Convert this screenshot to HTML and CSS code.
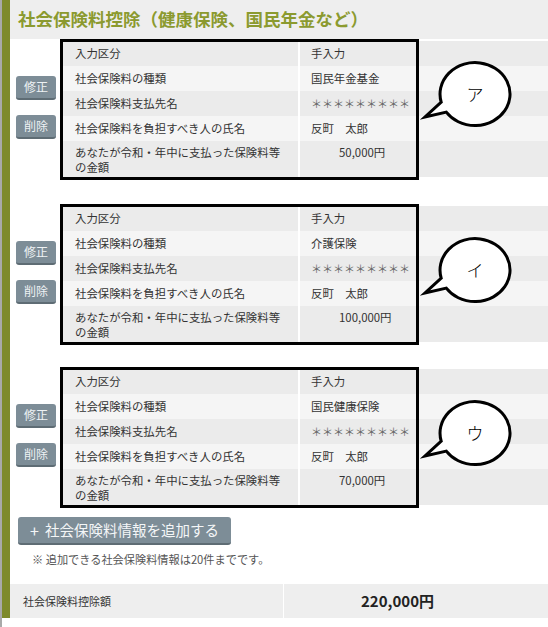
FILE: index.html
```html
<!DOCTYPE html>
<html lang="ja">
<head>
<meta charset="utf-8">
<link rel="stylesheet" href="styles.css">
</head>
<body>
<div class="frame">
  <div class="section">
    <div class="header"><h1 class="title">社会保険料控除（健康保険、国民年金など）</h1></div>

    <div class="record">
      <div class="btns"><button class="btn">修正</button><button class="btn">削除</button></div>
      <div class="table">
        <div class="row dark"><div class="cell label">入力区分</div><div class="cell value">手入力</div></div>
        <div class="row light"><div class="cell label">社会保険料の種類</div><div class="cell value">国民年金基金</div></div>
        <div class="row dark"><div class="cell label">社会保険料支払先名</div><div class="cell value mask">＊＊＊＊＊＊＊＊＊</div></div>
        <div class="row light"><div class="cell label">社会保険料を負担すべき人の氏名</div><div class="cell value">反町　太郎</div></div>
        <div class="row dark tall"><div class="cell label">あなたが令和・年中に支払った保険料等<br>の金額</div><div class="cell value amount">50,000円</div></div>
      </div>
      <div class="frame-box"></div>
      <svg class="bubble bubble-a" viewBox="0 0 100 76" width="100" height="76"><path d="M 21.2 46.2 L 5 61 L 26.3 56.1 A 35 31.5 0 1 0 21.2 46.2 Z" fill="#fff" stroke="#000" stroke-width="3" stroke-linejoin="miter"/><text x="55" y="45" text-anchor="middle" class="bubble-text">ア</text></svg>
    </div>

    <div class="record">
      <div class="btns"><button class="btn">修正</button><button class="btn">削除</button></div>
      <div class="table">
        <div class="row dark"><div class="cell label">入力区分</div><div class="cell value">手入力</div></div>
        <div class="row light"><div class="cell label">社会保険料の種類</div><div class="cell value">介護保険</div></div>
        <div class="row dark"><div class="cell label">社会保険料支払先名</div><div class="cell value mask">＊＊＊＊＊＊＊＊＊</div></div>
        <div class="row light"><div class="cell label">社会保険料を負担すべき人の氏名</div><div class="cell value">反町　太郎</div></div>
        <div class="row dark tall"><div class="cell label">あなたが令和・年中に支払った保険料等<br>の金額</div><div class="cell value amount">100,000円</div></div>
      </div>
      <div class="frame-box"></div>
      <svg class="bubble bubble-b" viewBox="0 0 100 76" width="100" height="76"><path d="M 21.2 46.2 L 5 61 L 26.3 56.1 A 35 31.5 0 1 0 21.2 46.2 Z" fill="#fff" stroke="#000" stroke-width="3" stroke-linejoin="miter"/><text x="55" y="45" text-anchor="middle" class="bubble-text">イ</text></svg>
    </div>

    <div class="record last">
      <div class="btns"><button class="btn">修正</button><button class="btn">削除</button></div>
      <div class="table">
        <div class="row dark"><div class="cell label">入力区分</div><div class="cell value">手入力</div></div>
        <div class="row light"><div class="cell label">社会保険料の種類</div><div class="cell value">国民健康保険</div></div>
        <div class="row dark"><div class="cell label">社会保険料支払先名</div><div class="cell value mask">＊＊＊＊＊＊＊＊＊</div></div>
        <div class="row light"><div class="cell label">社会保険料を負担すべき人の氏名</div><div class="cell value">反町　太郎</div></div>
        <div class="row dark tall"><div class="cell label">あなたが令和・年中に支払った保険料等<br>の金額</div><div class="cell value amount">70,000円</div></div>
      </div>
      <div class="frame-box"></div>
      <svg class="bubble bubble-c" viewBox="0 0 100 76" width="100" height="76"><path d="M 21.2 46.2 L 5 61 L 26.3 56.1 A 35 31.5 0 1 0 21.2 46.2 Z" fill="#fff" stroke="#000" stroke-width="3" stroke-linejoin="miter"/><text x="55" y="45" text-anchor="middle" class="bubble-text">ウ</text></svg>
    </div>

    <div class="add-area">
      <button class="add-btn"><span class="plus">+</span>社会保険料情報を追加する</button>
      <p class="note">※ 追加できる社会保険料情報は20件までです。</p>
    </div>

    <div class="total">
      <div class="total-label">社会保険料控除額</div>
      <div class="total-value">220,000円</div>
    </div>
  </div>
</div>
</body>
</html>
```

FILE: styles.css
```css
* { box-sizing: border-box; }

html, body {
  margin: 0;
  padding: 0;
  background: #fff;
}

body {
  font-family: "Noto Sans CJK JP", "Noto Sans", sans-serif;
  color: #333;
  width: 548px;
  height: 627px;
  overflow: hidden;
}

.frame {
  border-left: 2px solid #a9a9a9;
  min-height: 627px;
}

.section {
  border-left: 8px solid #7e8a2b;
}

.header {
  background: #eeeeee;
  height: 39px;
  padding-left: 8px;
  display: flex;
  align-items: center;
}

.title {
  margin: 0;
  font-size: 17.5px;
  line-height: 20px;
  font-weight: bold;
  color: #8b9a2f;
  letter-spacing: 0;
  padding-bottom: 2px;
}

.record {
  position: relative;
  display: flex;
  height: 141px;
  margin-bottom: 24px;
}

.record.last {
  margin-top: -2px;
}

.btns {
  width: 50px;
  display: flex;
  flex-direction: column;
  justify-content: center;
  gap: 15px;
  padding-left: 6px;
  padding-bottom: 4px;
}

.btn {
  width: 40px;
  height: 24px;
  padding: 0;
  border: none;
  border-bottom: 2px solid #5e6c74;
  border-radius: 3px;
  background: #7d8d97;
  color: #eef2f4;
  font-family: inherit;
  font-size: 12px;
  line-height: 22px;
}

.table {
  flex: 1;
  padding-top: 2px;
}

.row {
  display: grid;
  grid-template-columns: 238px 1fr;
  column-gap: 2px;
  height: 25px;
  font-size: 11.4px;
  line-height: 25px;
  color: #333;
}

.row.tall {
  height: 36px;
  line-height: 15px;
}

.row.dark .cell { background: #ebebeb; }
.row.light .cell { background: #f5f5f5; }

.cell.label {
  padding-left: 15px;
  white-space: nowrap;
}

.cell.value {
  padding-left: 11px;
  white-space: nowrap;
}

.row.tall .cell {
  padding-top: 4px;
}

.cell.amount {
  padding-left: 39px;
}

.cell.mask {
  color: #666;
  font-size: 11px;
}

.frame-box {
  position: absolute;
  left: 50px;
  top: 0;
  width: 359px;
  height: 141px;
  border: 3px solid #000;
  pointer-events: none;
}

.bubble {
  position: absolute;
  left: 410px;
  overflow: visible;
}

.bubble-a { top: 17px; }
.bubble-b { top: 28px; }
.bubble-c { top: 28px; }

.bubble-text {
  font-family: "Noto Sans CJK JP", sans-serif;
  font-size: 17px;
  font-weight: 300;
  fill: #000;
}

.add-area {
  padding-left: 8px;
  margin-top: -15px;
}

.add-btn {
  width: 213px;
  height: 28px;
  padding: 0 0 0 12px;
  border: none;
  border-bottom: 2px solid #5e6c74;
  border-radius: 3px;
  background: #7d8d97;
  color: #f4f6f7;
  font-family: inherit;
  font-size: 14.5px;
  line-height: 26px;
  text-align: left;
  display: flex;
  align-items: center;
}

.plus {
  margin-right: 6px;
  font-size: 16px;
}

.note {
  margin: 6px 0 0 14px;
  font-size: 11.2px;
  line-height: 16px;
  color: #555;
}

.total {
  margin-top: 17px;
  display: grid;
  grid-template-columns: 273px 1fr;
  column-gap: 1px;
  height: 34px;
}

.total-label {
  background: #eeeeee;
  padding-left: 13px;
  font-size: 11px;
  line-height: 34px;
  color: #333;
}

.total-value {
  background: #eeeeee;
  padding-left: 77px;
  font-size: 15px;
  font-weight: bold;
  line-height: 34px;
  color: #222;
}
```
